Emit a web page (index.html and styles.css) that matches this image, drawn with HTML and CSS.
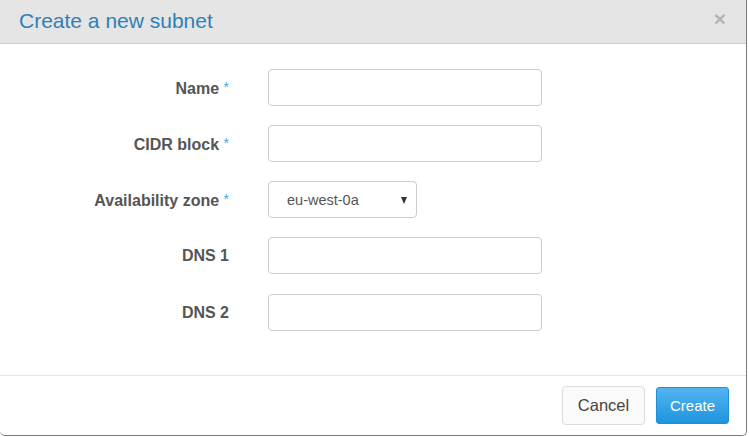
FILE: index.html
```html
<!DOCTYPE html>
<html>
<head>
<meta charset="utf-8">
<link rel="stylesheet" href="styles.css">
</head>
<body>
<div class="modal">
  <div class="modal-header">
    <h4 class="title">Create a new subnet</h4>
    <span class="close">×</span>
  </div>
  <div class="modal-body">
    <div class="row">
      <label class="label">Name <span class="req">*</span></label>
      <input class="input" type="text">
    </div>
    <div class="row">
      <label class="label">CIDR block <span class="req">*</span></label>
      <input class="input" type="text">
    </div>
    <div class="row">
      <label class="label">Availability zone <span class="req">*</span></label>
      <div class="select-wrap">
        <div class="select">eu-west-0a</div>
        <span class="caret"></span>
      </div>
    </div>
    <div class="row">
      <label class="label">DNS 1</label>
      <input class="input" type="text">
    </div>
    <div class="row">
      <label class="label">DNS 2</label>
      <input class="input" type="text">
    </div>
  </div>
  <div class="modal-footer">
    <button class="btn btn-default">Cancel</button>
    <button class="btn btn-primary">Create</button>
  </div>
</div>
</body>
</html>
```

FILE: styles.css
```css
html, body {
  margin: 0;
  padding: 0;
  background: #ffffff;
  font-family: "Liberation Sans", Arial, sans-serif;
}
body {
  width: 749px;
  height: 437px;
  overflow: hidden;
}
.modal {
  width: 746px;
  height: 435px;
  background: #fff;
  border-right: 1px solid #7a7a7a;
  border-bottom: 1px solid #7a7a7a;
  border-bottom-right-radius: 5px;
  border-bottom-left-radius: 5px;
  display: flex;
  flex-direction: column;
  overflow: hidden;
}
.modal-header {
  height: 43px;
  background: #e5e5e5;
  border-bottom: 1px solid #cfcfcf;
  display: flex;
  align-items: center;
  justify-content: space-between;
  padding: 0 20px 0 19px;
  box-sizing: content-box;
}
.title {
  margin: 0;
  font-size: 21px;
  font-weight: normal;
  color: #2f80b5;
  padding-bottom: 1px;
}
.close {
  font-size: 21px;
  font-weight: bold;
  color: #b3b3b3;
  line-height: 1;
  margin-top: -6px;
}
.modal-body {
  flex: 1;
  padding-top: 25px;
  display: flex;
  flex-direction: column;
  gap: 19px;
}
.row {
  display: flex;
  align-items: center;
  height: 37px;
}
.row:last-child {
  margin-top: 1px;
}
.label {
  width: 229px;
  text-align: right;
  font-size: 16px;
  font-weight: bold;
  color: #555;
  margin-right: 39px;
  padding-top: 1px;
}
.req {
  color: #3ea9e6;
  font-weight: normal;
  font-size: 14px;
  vertical-align: 2px;
}
.input {
  width: 274px;
  height: 37px;
  box-sizing: border-box;
  border: 1px solid #ccc;
  border-radius: 4px;
  margin: 0;
  padding: 6px 12px;
  font-size: 14px;
  background: #fff;
}
.select-wrap {
  position: relative;
}
.select {
  width: 149px;
  height: 37px;
  box-sizing: border-box;
  border: 1px solid #ccc;
  border-radius: 4px;
  padding-left: 18px;
  display: flex;
  align-items: center;
  font-size: 14.5px;
  color: #555;
}
.caret {
  position: absolute;
  right: 10px;
  top: 16px;
  width: 0;
  height: 0;
  border-left: 3.5px solid transparent;
  border-right: 3.5px solid transparent;
  border-top: 7px solid #333;
}
.modal-footer {
  border-top: 1px solid #e5e5e5;
  height: 60px;
  box-sizing: border-box;
  display: flex;
  justify-content: flex-end;
  align-items: center;
  gap: 11px;
  padding: 0 17px 1px 0;
}
.btn {
  font-family: "Liberation Sans", Arial, sans-serif;
  font-size: 15px;
  border-radius: 4px;
  cursor: pointer;
  margin: 0;
}
.btn-default {
  width: 83px;
  height: 39px;
  background: #fafafa;
  border: 1px solid #dcdcdc;
  color: #444;
  font-size: 16.5px;
}
.btn-primary {
  width: 73px;
  height: 37px;
  background: linear-gradient(#54b4ef, #1e94df);
  border: 1px solid #1b8fd9;
  border-radius: 3px;
  color: #fff;
}
```
